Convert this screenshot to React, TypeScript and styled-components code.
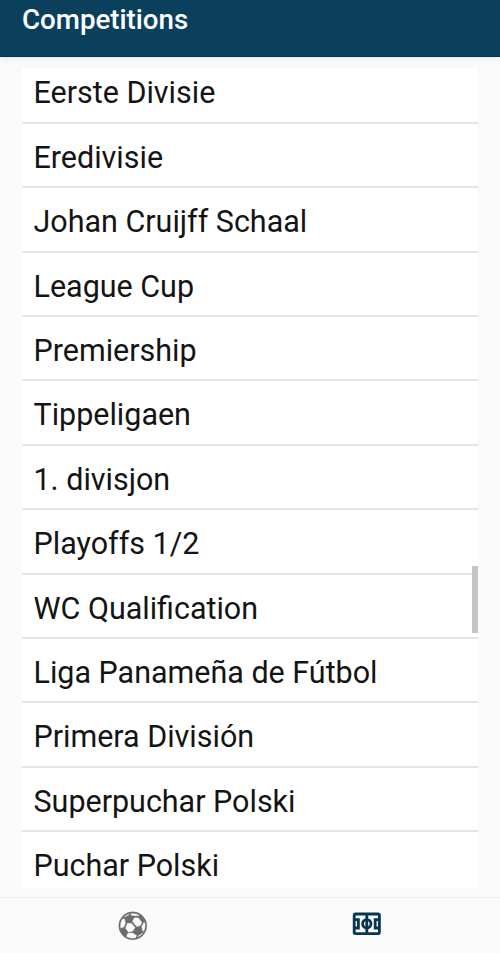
import React from "react";
import styled, { createGlobalStyle } from "styled-components";

const GlobalStyle = createGlobalStyle`
  * { box-sizing: border-box; }
  body { margin: 0; background: #fafafa; font-family: Roboto, sans-serif; overflow: hidden; }
`;
const Screen = styled.div`
  height: 953px;
  display: flex;
  flex-direction: column;
`;
const Header = styled.header`
  height: 57px;
  flex: none;
  padding: 3px 22px 0;
  background: #0a405c;
  border-bottom: 1px solid #07344c;
  box-shadow: 0 1px 7px rgba(0, 0, 0, 0.09);
`;
const Title = styled.h1`
  margin: 0;
  font-size: 27.7px;
  line-height: 34px;
  font-weight: 500;
  color: #fff;
`;
const List = styled.ul`
  position: relative;
  list-style: none;
  flex: none;
  height: 820px;
  margin: 11px 22px 0;
  padding: 0;
  background: #fff;
`;
const Row = styled.li`
  height: 64.36px;
  padding: 0 12px 0 11.5px;
  line-height: 68px;
  font-size: 30.48px;
  color: #141414;
  white-space: nowrap;
  border-bottom: 2px solid #e4e4e4;
  &:first-of-type { height: 56px; line-height: 50px; }
  &:last-of-type { border-bottom: 0; height: 56px; }
`;
const ScrollThumb = styled.div`
  position: absolute;
  right: 0;
  top: 498px;
  width: 6px;
  height: 67px;
  background: #c4c4c4;
`;
const TabBar = styled.nav`
  margin-top: auto;
  height: 56px;
  padding: 0 16px;
  display: grid;
  grid-template-columns: 1fr 1fr;
  border-top: 1px solid #efefef;
`;
const Tab = styled.button<{ $active?: boolean }>`
  border: 0;
  padding: ${(p) => (p.$active ? "9px 0 0" : "11px 0 0")};
  background: none;
  color: ${(p) => (p.$active ? "#083650" : "#6c6c6c")};
  display: flex;
  justify-content: center;
  align-items: flex-start;
`;
const Icon = styled.svg`
  width: 33.6px;
  height: 33.6px;
  fill: currentColor;
`;

const competitions = [
  "Eerste Divisie", "Eredivisie", "Johan Cruijff Schaal", "League Cup", "Premiership",
  "Tippeligaen", "1. divisjon", "Playoffs 1/2", "WC Qualification",
  "Liga Panameña de Fútbol", "Primera División", "Superpuchar Polski", "Puchar Polski",
];

const SoccerIcon = () => (
  <Icon viewBox="0 0 24 24" stroke="currentColor" strokeWidth="0.25">
    <path d="M12,2A10,10 0 0,0 2,12A10,10 0 0,0 12,22A10,10 0 0,0 22,12A10,10 0 0,0 12,2M12,3C13.76,3 15.4,3.53 16.78,4.41L16.5,5H13L12,5L10.28,4.16L10.63,3.13C11.08,3.05 11.53,3 12,3M9.53,3.38L9.19,4.41L6.63,5.69L5.38,5.94C6.5,4.73 7.92,3.84 9.53,3.38M13,6H16L18.69,9.59L17.44,12.16L14.81,12.78L11.53,8.94L13,6M6.16,6.66L7,10L5.78,13.06L3.22,13.94C3.08,13.31 3,12.67 3,12C3,10.1 3.59,8.36 4.59,6.91L6.16,6.66M20.56,9.22C20.85,10.09 21,11.03 21,12C21,13.44 20.63,14.79 20.03,16H19L18.16,12.66L19.66,9.66L20.56,9.22M8,10H11L13.81,13.28L12,16L8.84,16.78L6.53,13.69L8,10M12,17L15,19L14.13,20.72C13.44,20.88 12.73,21 12,21C10.25,21 8.63,20.5 7.25,19.63L8.41,17H12M19,17H19.5C18.5,18.5 17,19.67 15.31,20.34L16,19L19,17Z" />
  </Icon>
);

const FieldIcon = () => (
  <Icon viewBox="0 0 24 24">
    <g fill="none" stroke="currentColor" strokeWidth="2">
      <rect x="3" y="5" width="18" height="14" rx="1" />
      <path d="M12 5V19M3 9H6V15H3M21 9H18V15H21" />
      <circle cx="12" cy="12" r="3" />
    </g>
  </Icon>
);

export default function App() {
  return (
    <Screen>
      <GlobalStyle />
      <Header><Title>Competitions</Title></Header>
      <List>
        {competitions.map((name) => <Row key={name}>{name}</Row>)}
        <ScrollThumb />
      </List>
      <TabBar>
        <Tab aria-label="Matches"><SoccerIcon /></Tab>
        <Tab $active aria-label="Competitions"><FieldIcon /></Tab>
      </TabBar>
    </Screen>
  );
}
